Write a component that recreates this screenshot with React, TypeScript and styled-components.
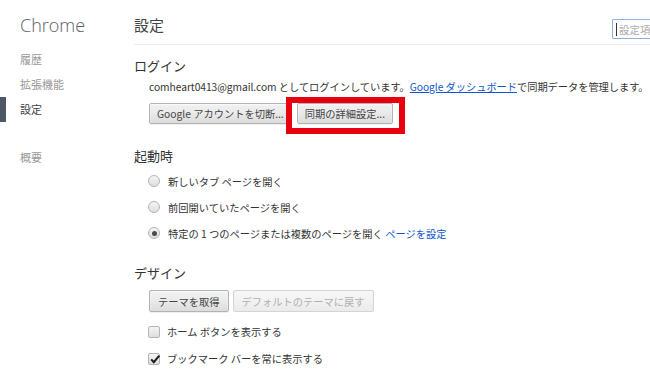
import React from 'react';
import styled, { createGlobalStyle, css } from 'styled-components';

const GlobalStyle = createGlobalStyle`
  html, body { margin: 0; padding: 0; background: #fff; }
  body {
    width: 650px;
    height: 378px;
    overflow: hidden;
    font-family: "Noto Sans CJK JP", "Noto Sans", sans-serif;
    font-size: 10.25px;
    color: #333;
  }
`;

const Page = styled.div`
  display: flex;
  width: 650px;
  height: 378px;
  overflow: hidden;
`;

const Sidebar = styled.nav`
  width: 134px;
  flex-shrink: 0;
  padding-top: 13px;
  box-sizing: border-box;
`;

const Brand = styled.div`
  font-family: "Open Sans", "Noto Sans", sans-serif;
  font-weight: 300;
  font-size: 18px;
  line-height: 24px;
  color: #5c6166;
  padding-left: 20px;
  margin-bottom: 10px;
`;

const NavList = styled.div<{ $gap?: number }>`
  display: flex;
  flex-direction: column;
  margin-top: ${(p) => p.$gap ?? 0}px;
`;

const NavItem = styled.div<{ $selected?: boolean }>`
  height: 25px;
  line-height: 25px;
  font-size: 11px;
  padding-left: 20px;
  color: #999;
  white-space: nowrap;
  ${(p) =>
    p.$selected &&
    css`
      color: #444;
      padding-left: 14px;
      border-left: 6px solid #4e5764;
    `}
`;

const Main = styled.main`
  flex: 1;
  min-width: 0;
`;

const Header = styled.header`
  display: flex;
  justify-content: space-between;
  align-items: flex-start;
  height: 44px;
  border-bottom: 1px solid #ececec;
  margin-right: -120px;
`;

const PageTitle = styled.h1`
  margin: 15px 0 0;
  font-size: 15px;
  line-height: 20px;
  font-weight: normal;
  color: #444;
`;

const SearchBox = styled.div`
  margin-top: 19px;
  width: 158px;
  height: 20px;
  box-sizing: border-box;
  border: 1px solid #8fb0da;
  border-radius: 1px;
  display: flex;
  align-items: center;
  padding-left: 3px;
  gap: 2px;
  color: #aaa;
  font-size: 10.5px;
  white-space: nowrap;
  overflow: hidden;
`;

const Caret = styled.span`
  width: 1px;
  height: 13px;
  background: #333;
`;

const Section = styled.section<{ $top: number }>`
  margin-top: ${(p) => p.$top}px;
`;

const SectionTitle = styled.h3`
  margin: 0;
  font-size: 13px;
  line-height: 20px;
  font-weight: normal;
  color: #333;
`;

const Indent = styled.div`
  padding-left: 15px;
`;

const TextLine = styled.div`
  margin-top: 3px;
  line-height: 16px;
  white-space: nowrap;
  letter-spacing: -0.05px;
  color: #333;
`;

const Link = styled.a<{ $underline?: boolean }>`
  color: #15c;
  text-decoration: ${(p) => (p.$underline ? 'underline' : 'none')};
  cursor: pointer;
`;

const ButtonRow = styled.div<{ $top: number; $gap: number }>`
  display: flex;
  align-items: center;
  gap: ${(p) => p.$gap}px;
  margin-top: ${(p) => p.$top}px;
`;

const Button = styled.button<{ $h?: number; $pad?: number }>`
  height: ${(p) => p.$h ?? 21}px;
  padding: 0 ${(p) => p.$pad ?? 7}px;
  font-family: inherit;
  font-size: 10.25px;
  color: #444;
  border: 1px solid #b3b3b3;
  border-radius: 2px;
  background: linear-gradient(#f0f0f0, #ececec 40%, #dcdcdc);
  box-shadow: 0 1px 0 rgba(0, 0, 0, 0.06), inset 0 1px 2px rgba(255, 255, 255, 0.8);
  white-space: nowrap;
  cursor: default;
  &:disabled {
    color: #b0b0b0;
    background: linear-gradient(#f7f7f7, #f3f3f3 40%, #ebebeb);
    border-color: #d4d4d4;
    box-shadow: none;
  }
`;

const Highlight = styled.span`
  position: relative;
  display: inline-flex;
  &::after {
    content: '';
    position: absolute;
    left: -11px;
    top: -6px;
    right: -12px;
    bottom: -10px;
    border: 6px solid #e8000e;
    pointer-events: none;
  }
`;

const OptionList = styled.div<{ $top: number }>`
  display: flex;
  flex-direction: column;
  margin-top: ${(p) => p.$top}px;
`;

const OptionRow = styled.label<{ $h: number; $gap: number }>`
  display: flex;
  align-items: center;
  height: ${(p) => p.$h}px;
  gap: ${(p) => p.$gap}px;
  padding-left: 14px;
  color: #333;
  white-space: nowrap;
`;

const RadioCircle = styled.span<{ $checked?: boolean }>`
  width: 12px;
  height: 12px;
  border-radius: 50%;
  box-sizing: border-box;
  border: 1px solid #b5b5b5;
  background: linear-gradient(#f4f4f4, #dedede);
  display: flex;
  align-items: center;
  justify-content: center;
  ${(p) =>
    p.$checked &&
    css`
      &::after {
        content: '';
        width: 5px;
        height: 5px;
        border-radius: 50%;
        background: #4a4a4a;
      }
    `}
`;

const CheckBox = styled.span`
  position: relative;
  width: 12px;
  height: 12px;
  box-sizing: border-box;
  border: 1px solid #b5b5b5;
  border-radius: 2px;
  background: linear-gradient(#f4f4f4, #dedede);
  display: flex;
  align-items: center;
  justify-content: center;
`;

const CheckMark = styled.svg`
  position: absolute;
  left: 0;
  top: -1px;
`;

const Radio = ({ checked, children }: { checked?: boolean; children: React.ReactNode }) => (
  <OptionRow $h={26} $gap={8}>
    <RadioCircle $checked={checked} />
    <span>{children}</span>
  </OptionRow>
);

const Check = ({ checked, children }: { checked?: boolean; children: React.ReactNode }) => (
  <OptionRow $h={27} $gap={7}>
    <CheckBox>
      {checked && (
        <CheckMark width="12" height="12" viewBox="0 0 12 12">
          <path d="M2.2 6.4 L4.8 9.2 L10.3 2.6" fill="none" stroke="#1a1a1a" strokeWidth="2" />
        </CheckMark>
      )}
    </CheckBox>
    <span>{children}</span>
  </OptionRow>
);

export default function App() {
  return (
    <>
      <GlobalStyle />
      <Page>
        <Sidebar>
          <Brand>Chrome</Brand>
          <NavList>
            <NavItem>履歴</NavItem>
            <NavItem>拡張機能</NavItem>
            <NavItem $selected>設定</NavItem>
          </NavList>
          <NavList $gap={23}>
            <NavItem>概要</NavItem>
          </NavList>
        </Sidebar>
        <Main>
          <Header>
            <PageTitle>設定</PageTitle>
            <SearchBox>
              <Caret />
              設定項目を検索
            </SearchBox>
          </Header>

          <Section $top={11}>
            <SectionTitle>ログイン</SectionTitle>
            <Indent>
              <TextLine>
                comheart0413@gmail.com としてログインしています。
                <Link $underline>Google ダッシュボード</Link>で同期データを管理します。
              </TextLine>
              <ButtonRow $top={8} $gap={5}>
                <Button $pad={7}>Google アカウントを切断...</Button>
                <Highlight>
                  <Button $pad={7}>同期の詳細設定...</Button>
                </Highlight>
              </ButtonRow>
            </Indent>
          </Section>

          <Section $top={22}>
            <SectionTitle>起動時</SectionTitle>
            <OptionList $top={2}>
              <Radio>新しいタブ ページを開く</Radio>
              <Radio>前回開いていたページを開く</Radio>
              <Radio checked>
                特定の 1 つのページまたは複数のページを開く <Link>ページを設定</Link>
              </Radio>
            </OptionList>
          </Section>

          <Section $top={17}>
            <SectionTitle>デザイン</SectionTitle>
            <Indent>
              <ButtonRow $top={7} $gap={4}>
                <Button $h={22} $pad={8}>テーマを取得</Button>
                <Button $h={22} $pad={8} disabled>
                  デフォルトのテーマに戻す
                </Button>
              </ButtonRow>
            </Indent>
            <OptionList $top={6}>
              <Check>ホーム ボタンを表示する</Check>
              <Check checked>ブックマーク バーを常に表示する</Check>
            </OptionList>
          </Section>
        </Main>
      </Page>
    </>
  );
}
